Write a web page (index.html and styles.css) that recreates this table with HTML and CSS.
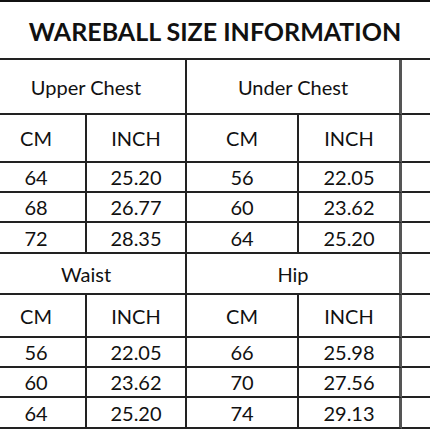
FILE: index.html
```html
<!DOCTYPE html>
<html>
<head>
<meta charset="utf-8">
<link rel="stylesheet" href="styles.css">
</head>
<body>
<div class="sheet">
  <div class="title">WAREBALL SIZE INFORMATION</div>
  <table class="sizes">
    <colgroup>
      <col class="c1"><col class="c2"><col class="c3"><col class="c4"><col class="c5">
    </colgroup>
    <tr class="r-group">
      <td colspan="2">Upper Chest</td>
      <td colspan="2" class="edge">Under Chest</td>
      <td></td>
    </tr>
    <tr class="r-unit">
      <td>CM</td><td>INCH</td><td>CM</td><td class="edge">INCH</td><td></td>
    </tr>
    <tr class="r-data"><td>64</td><td>25.20</td><td>56</td><td class="edge">22.05</td><td></td></tr>
    <tr class="r-data"><td>68</td><td>26.77</td><td>60</td><td class="edge">23.62</td><td></td></tr>
    <tr class="r-data r-last"><td>72</td><td>28.35</td><td>64</td><td class="edge">25.20</td><td></td></tr>
    <tr class="r-group2">
      <td colspan="2">Waist</td>
      <td colspan="2" class="edge">Hip</td>
      <td></td>
    </tr>
    <tr class="r-unit2">
      <td>CM</td><td>INCH</td><td>CM</td><td class="edge">INCH</td><td></td>
    </tr>
    <tr class="r-data"><td>56</td><td>22.05</td><td>66</td><td class="edge">25.98</td><td></td></tr>
    <tr class="r-data"><td>60</td><td>23.62</td><td>70</td><td class="edge">27.56</td><td></td></tr>
    <tr class="r-data r-last"><td>64</td><td>25.20</td><td>74</td><td class="edge">29.13</td><td></td></tr>
  </table>
</div>
</body>
</html>
```
FILE: styles.css
```css
html, body {
  margin: 0;
  padding: 0;
  background: #fff;
}
.sheet {
  width: 430px;
  height: 430px;
  overflow: hidden;
  font-family: Lato, "Liberation Sans", sans-serif;
  color: #111;
}
.title {
  box-sizing: border-box;
  height: 60px;
  padding-top: 3px;
  border-top: 2px solid #111;
  border-bottom: 2px solid #222;
  display: flex;
  align-items: center;
  justify-content: center;
  font-weight: 700;
  font-size: 25px;
  line-height: 1;
}
.sizes {
  border-collapse: separate;
  border-spacing: 0;
  table-layout: fixed;
  width: 495px;
  margin-left: -13px;
  font-size: 20px;
  line-height: 1;
}
.c1 { width: 100px; }
.c2 { width: 100px; }
.c3 { width: 112px; }
.c4 { width: 103px; }
.c5 { width: 80px; }
.sizes td {
  padding: 0;
  text-align: center;
  vertical-align: middle;
  border-right: 2px solid #222;
  border-bottom: 2px solid #222;
}
.sizes td.edge {
  border-right: 3px solid #555;
}
.r-group { height: 55px; }
.r-unit { height: 48px; }
.r-data { height: 30px; }
.r-last { height: 31px; }
.r-group2 { height: 41px; }
.r-unit2 { height: 43px; }
```
